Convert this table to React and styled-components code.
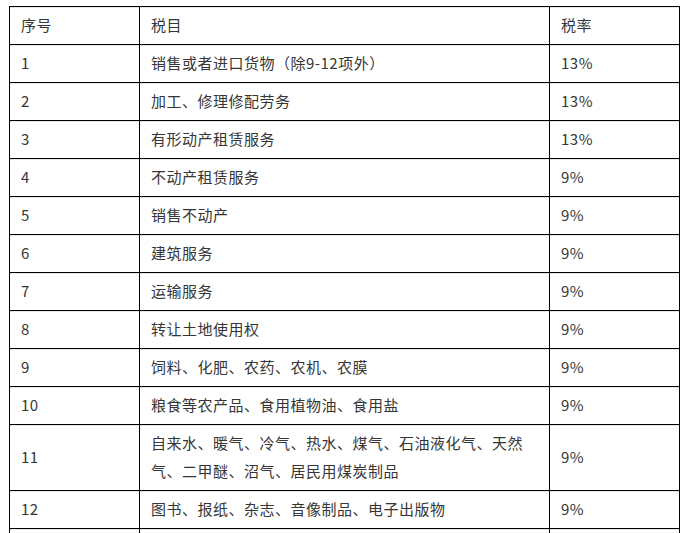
import React from "react";
import styled, { createGlobalStyle } from "styled-components";

const Global = createGlobalStyle`
  html, body {
    margin: 0;
    padding: 0;
    background: #ffffff;
  }
  body {
    font-family: "Noto Sans CJK SC", "Noto Sans", sans-serif;
  }
`;

const Page = styled.div`
  padding: 6px 0 0 9px;
  width: 683px;
  height: 533px;
  box-sizing: border-box;
  overflow: hidden;
`;

const Table = styled.table`
  border-collapse: collapse;
  table-layout: fixed;
  width: 671px;
`;

const Col = styled.col`
  width: ${(p) => p.$w}px;
`;

const Cell = styled.td`
  border: 1px solid #000;
  padding: 4px 10px 5px 11px;
  height: 28px;
  font-size: 15px;
  line-height: 28px;
  letter-spacing: 0.5px;
  color: #363636;
  vertical-align: middle;
  text-align: left;
  font-weight: 400;
  box-shadow: inset 0 1px 0 #e6e6e6;
  word-break: break-all;
  text-spacing-trim: space-all;
  font-feature-settings: "chws" 0, "halt" 0, "palt" 0;
`;

const HeadCell = styled(Cell).attrs({ as: "th" })``;

const rows = [
  ["1", "销售或者进口货物（除9-12项外）", "13%"],
  ["2", "加工、修理修配劳务", "13%"],
  ["3", "有形动产租赁服务", "13%"],
  ["4", "不动产租赁服务", "9%"],
  ["5", "销售不动产", "9%"],
  ["6", "建筑服务", "9%"],
  ["7", "运输服务", "9%"],
  ["8", "转让土地使用权", "9%"],
  ["9", "饲料、化肥、农药、农机、农膜", "9%"],
  ["10", "粮食等农产品、食用植物油、食用盐", "9%"],
  ["11", "自来水、暖气、冷气、热水、煤气、石油液化气、天然气、二甲醚、沼气、居民用煤炭制品", "9%"],
  ["12", "图书、报纸、杂志、音像制品、电子出版物", "9%"],
  ["13", "", ""],
];

export default function App() {
  return (
    <>
      <Global />
      <Page>
        <Table>
          <colgroup>
            <Col $w={130} />
            <Col $w={410} />
            <Col $w={130} />
          </colgroup>
          <thead>
            <tr>
              <HeadCell>序号</HeadCell>
              <HeadCell>税目</HeadCell>
              <HeadCell>税率</HeadCell>
            </tr>
          </thead>
          <tbody>
            {rows.map((r) =>
              r[1] ? (
                <tr key={r[0]}>
                  <Cell>{r[0]}</Cell>
                  <Cell>{r[1]}</Cell>
                  <Cell>{r[2]}</Cell>
                </tr>
              ) : (
                <tr key={r[0]}>
                  <Cell />
                  <Cell />
                  <Cell />
                </tr>
              )
            )}
          </tbody>
        </Table>
      </Page>
    </>
  );
}
